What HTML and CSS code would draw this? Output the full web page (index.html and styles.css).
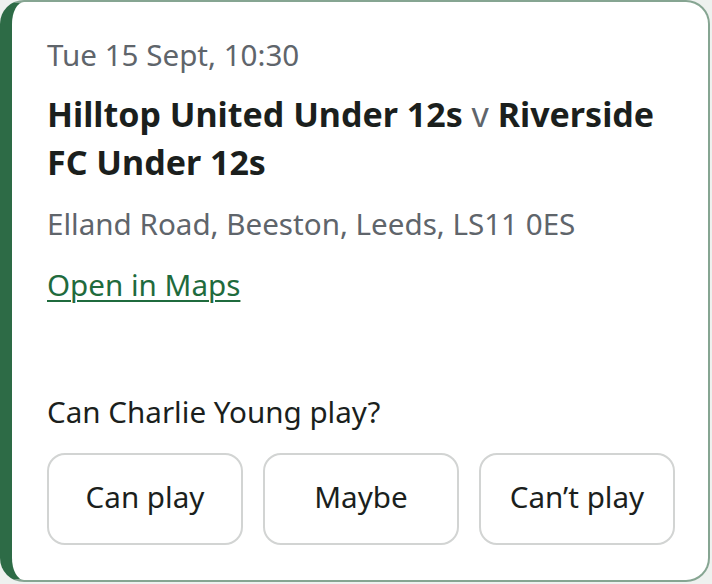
FILE: index.html
```html
<!DOCTYPE html>
<html lang="en">
<head>
<meta charset="utf-8">
<link rel="stylesheet" href="styles.css">
</head>
<body>
<div class="card">
  <div class="when">Tue 15 Sept, 10:30</div>
  <h2 class="title">Hilltop United Under 12s <span class="vs">v</span> Riverside FC Under 12s</h2>
  <div class="address">Elland Road, Beeston, Leeds, LS11 0ES</div>
  <a class="maps" href="#">Open in Maps</a>
  <div class="question">Can Charlie Young play?</div>
  <div class="choices">
    <button class="choice">Can play</button>
    <button class="choice">Maybe</button>
    <button class="choice">Can’t play</button>
  </div>
</div>
</body>
</html>
```
FILE: styles.css
```css
html, body {
  margin: 0;
  padding: 0;
  background: #eef1ef;
}
body {
  width: 712px;
  height: 584px;
  font-family: "Noto Sans", "Open Sans", sans-serif;
  color: #1b1f1d;
}
.card {
  box-sizing: border-box;
  width: 710px;
  height: 582px;
  background: #ffffff;
  border: 2px solid #86a592;
  border-left: 12px solid #2d6b46;
  border-radius: 24px;
  padding: 32px 30px 0 35px;
  display: flex;
  flex-direction: column;
}
.when {
  font-size: 29.6px;
  line-height: 42px;
  color: #5f656b;
}
.title {
  margin: 14px 0 0;
  font-size: 34px;
  line-height: 48px;
  font-weight: 700;
}
.vs {
  font-weight: 400;
  color: #5f656b;
}
.address {
  margin-top: 17px;
  font-size: 29.6px;
  line-height: 42px;
  color: #5f656b;
}
.maps {
  margin-top: 19px;
  align-self: flex-start;
  font-size: 29.6px;
  line-height: 42px;
  color: #1f6b3d;
  text-decoration: underline;
  text-decoration-thickness: 2px;
  text-underline-offset: 4px;
}
.question {
  margin-top: 85px;
  font-size: 29.6px;
  line-height: 42px;
}
.choices {
  margin-top: 20px;
  display: grid;
  grid-template-columns: repeat(3, 196px);
  gap: 20px;
}
.choice {
  box-sizing: border-box;
  height: 92px;
  background: #ffffff;
  border: 2px solid #d2d4d3;
  border-radius: 18px;
  font-family: inherit;
  font-size: 29.6px;
  color: #1b1f1d;
  padding: 0 0 5px;
}
```
